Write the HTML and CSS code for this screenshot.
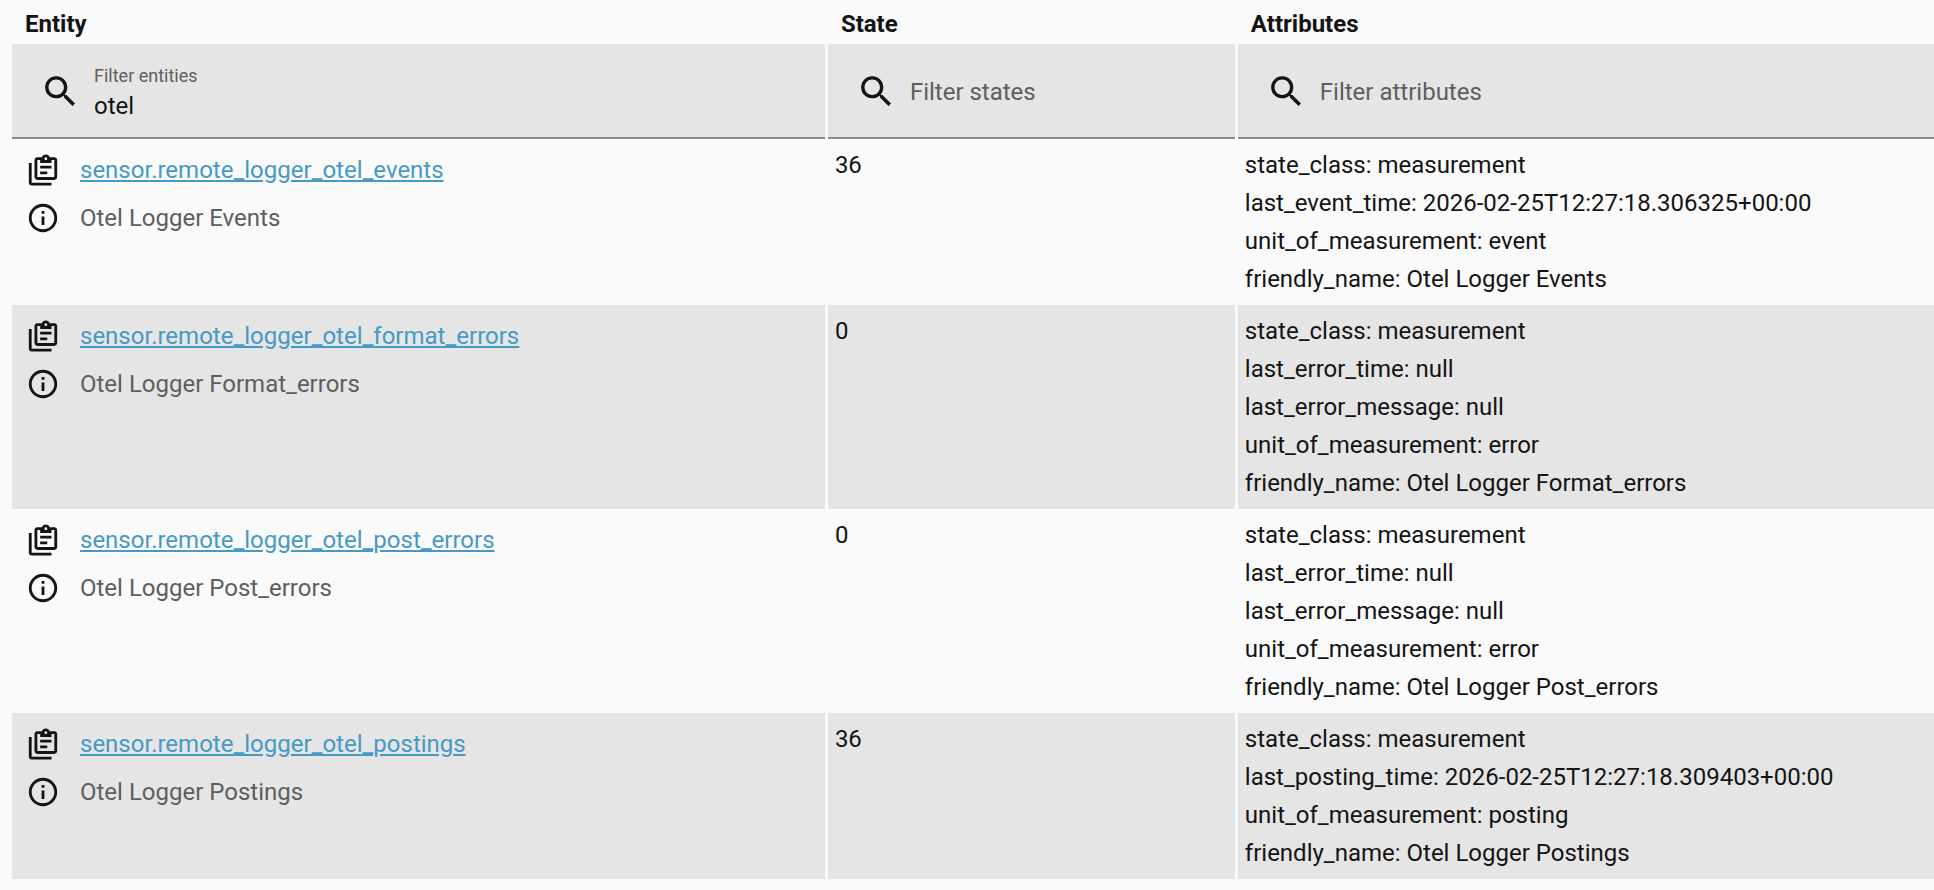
FILE: index.html
```html
<!DOCTYPE html>
<html lang="en">
  <head>
    <meta charset="UTF-8" />
    <meta name="viewport" content="width=device-width, initial-scale=1.0" />
    <title>States</title>
    <link rel="stylesheet" href="styles.css">
  </head>
  <body>
    <!-- Icon definitions -->
    <svg class="icon-defs" aria-hidden="true">
      <symbol id="icon-search" viewBox="0 0 24 24">
        <path d="M9.5,3A6.5,6.5 0 0,1 16,9.5C16,11.11 15.41,12.59 14.44,13.73L14.71,14H15.5L20.5,19L19,20.5L14,15.5V14.71L13.73,14.44C12.59,15.41 11.11,16 9.5,16A6.5,6.5 0 0,1 3,9.5A6.5,6.5 0 0,1 9.5,3M9.5,5C7,5 5,7 5,9.5C5,12 7,14 9.5,14C12,14 14,12 14,9.5C14,7 12,5 9.5,5Z" />
      </symbol>
      <symbol id="icon-copy" viewBox="0 0 24 24">
        <path d="M4 7V21H18V23H4C2.9 23 2 22.1 2 21V7H4M20 3C21.1 3 22 3.9 22 5V17C22 18.1 21.1 19 20 19H8C6.9 19 6 18.1 6 17V5C6 3.9 6.9 3 8 3H11.18C11.6 1.84 12.7 1 14 1C15.3 1 16.4 1.84 16.82 3H20M14 3C13.45 3 13 3.45 13 4C13 4.55 13.45 5 14 5C14.55 5 15 4.55 15 4C15 3.45 14.55 3 14 3M10 7V5H8V17H20V5H18V7H10M15 15H10V13H15V15M18 11H10V9H18V11Z" />
      </symbol>
      <symbol id="icon-info" viewBox="0 0 24 24">
        <path d="M11,9H13V7H11M12,20C7.59,20 4,16.41 4,12C4,7.59 7.59,4 12,4C16.41,4 20,7.59 20,12C20,16.41 16.41,20 12,20M12,2A10,10 0 0,0 2,12A10,10 0 0,0 12,22A10,10 0 0,0 22,12A10,10 0 0,0 12,2M11,17H13V11H11V17Z" />
      </symbol>
    </svg>

    <table class="entities">
      <colgroup>
        <col class="col-entity" />
        <col class="col-state" />
        <col class="col-attributes" />
      </colgroup>
      <thead>
        <tr class="titles">
          <th scope="col">Entity</th>
          <th scope="col">State</th>
          <th scope="col">Attributes</th>
        </tr>
        <tr class="filters">
          <td>
            <div class="search">
              <svg class="search-icon" aria-hidden="true"><use href="#icon-search" /></svg>
              <div class="field">
                <input type="text" id="filter-entities" value="otel" placeholder=" " />
                <label for="filter-entities">Filter entities</label>
              </div>
            </div>
          </td>
          <td>
            <div class="search">
              <svg class="search-icon" aria-hidden="true"><use href="#icon-search" /></svg>
              <div class="field">
                <input type="text" id="filter-states" placeholder=" " />
                <label for="filter-states">Filter states</label>
              </div>
            </div>
          </td>
          <td>
            <div class="search">
              <svg class="search-icon" aria-hidden="true"><use href="#icon-search" /></svg>
              <div class="field">
                <input type="text" id="filter-attributes" placeholder=" " />
                <label for="filter-attributes">Filter attributes</label>
              </div>
            </div>
          </td>
        </tr>
      </thead>
      <tbody>
        <tr>
          <td>
            <div class="entity-line">
              <button class="icon-btn" type="button" aria-label="Copy ID"><svg class="icon"><use href="#icon-copy" /></svg></button>
              <a href="#">sensor.remote_logger_otel_events</a>
            </div>
            <div class="entity-line">
              <button class="icon-btn" type="button" aria-label="More info"><svg class="icon"><use href="#icon-info" /></svg></button>
              <span class="name">Otel Logger Events</span>
            </div>
          </td>
          <td>36</td>
          <td>
            <div>state_class: measurement</div>
            <div>last_event_time: 2026-02-25T12:27:18.306325+00:00</div>
            <div>unit_of_measurement: event</div>
            <div>friendly_name: Otel Logger Events</div>
          </td>
        </tr>
        <tr>
          <td>
            <div class="entity-line">
              <button class="icon-btn" type="button" aria-label="Copy ID"><svg class="icon"><use href="#icon-copy" /></svg></button>
              <a href="#">sensor.remote_logger_otel_format_errors</a>
            </div>
            <div class="entity-line">
              <button class="icon-btn" type="button" aria-label="More info"><svg class="icon"><use href="#icon-info" /></svg></button>
              <span class="name">Otel Logger Format_errors</span>
            </div>
          </td>
          <td>0</td>
          <td>
            <div>state_class: measurement</div>
            <div>last_error_time: null</div>
            <div>last_error_message: null</div>
            <div>unit_of_measurement: error</div>
            <div>friendly_name: Otel Logger Format_errors</div>
          </td>
        </tr>
        <tr>
          <td>
            <div class="entity-line">
              <button class="icon-btn" type="button" aria-label="Copy ID"><svg class="icon"><use href="#icon-copy" /></svg></button>
              <a href="#">sensor.remote_logger_otel_post_errors</a>
            </div>
            <div class="entity-line">
              <button class="icon-btn" type="button" aria-label="More info"><svg class="icon"><use href="#icon-info" /></svg></button>
              <span class="name">Otel Logger Post_errors</span>
            </div>
          </td>
          <td>0</td>
          <td>
            <div>state_class: measurement</div>
            <div>last_error_time: null</div>
            <div>last_error_message: null</div>
            <div>unit_of_measurement: error</div>
            <div>friendly_name: Otel Logger Post_errors</div>
          </td>
        </tr>
        <tr>
          <td>
            <div class="entity-line">
              <button class="icon-btn" type="button" aria-label="Copy ID"><svg class="icon"><use href="#icon-copy" /></svg></button>
              <a href="#">sensor.remote_logger_otel_postings</a>
            </div>
            <div class="entity-line">
              <button class="icon-btn" type="button" aria-label="More info"><svg class="icon"><use href="#icon-info" /></svg></button>
              <span class="name">Otel Logger Postings</span>
            </div>
          </td>
          <td>36</td>
          <td>
            <div>state_class: measurement</div>
            <div>last_posting_time: 2026-02-25T12:27:18.309403+00:00</div>
            <div>unit_of_measurement: posting</div>
            <div>friendly_name: Otel Logger Postings</div>
          </td>
        </tr>
      </tbody>
    </table>
  </body>
</html>
```
FILE: styles.css
```css
* {
  margin: 0;
  padding: 0;
  box-sizing: border-box;
}

:root {
  --background: #fafafa;
  --row-alt: #e5e5e5;
  --text: #141414;
  --text-secondary: #5e5e5e;
  --link: #4799c6;
  --field-line: #8a8a8a;
}

body {
  padding-left: 12px;
  background: var(--background);
  color: var(--text);
  font-family: Roboto, sans-serif;
  font-size: 24px;
  line-height: 38px;
}

.icon-defs {
  display: none;
}

.entities {
  width: 100%;
  table-layout: fixed;
  border-collapse: separate;
  border-spacing: 0;
}

.col-entity {
  width: 42.45%;
}

.col-state {
  width: 21.33%;
}

/* Column separators */
.entities td:not(:last-child) {
  border-right: 3px solid var(--background);
}

.titles th {
  padding: 5px 13px 1px;
  text-align: left;
  font-weight: 700;
}

/* Filter row */
.search {
  display: flex;
  align-items: center;
  gap: 13px;
  height: 95px;
  padding: 2px 28px 0;
  background: var(--row-alt);
  border-bottom: 2px solid var(--field-line);
}

.search-icon {
  flex: none;
  width: 41px;
  height: 41px;
  fill: var(--text);
}

.field {
  flex: 1;
  display: grid;
}

.field input,
.field label {
  grid-area: 1 / 1;
}

.field input {
  width: 100%;
  height: 58px;
  padding-top: 29px;
  border: none;
  outline: none;
  background: none;
  color: var(--text);
  font: inherit;
}

.field label {
  font-size: 18px;
  line-height: 26px;
  color: var(--text-secondary);
  pointer-events: none;
}

.field input:placeholder-shown + label {
  align-self: center;
  font-size: 24px;
}

/* Entity rows */
tbody td {
  padding: 7px;
  vertical-align: top;
}

tbody tr:nth-child(even) td {
  background: var(--row-alt);
}

.entity-line {
  display: flex;
  align-items: center;
  gap: 13px;
}

.entity-line a {
  color: var(--link);
}

.name {
  color: var(--text-secondary);
}

.icon-btn {
  display: flex;
  align-items: center;
  justify-content: center;
  width: 48px;
  height: 48px;
  border: none;
  background: none;
  color: inherit;
  cursor: pointer;
}

.icon {
  width: 34px;
  height: 34px;
  fill: currentColor;
}
```
